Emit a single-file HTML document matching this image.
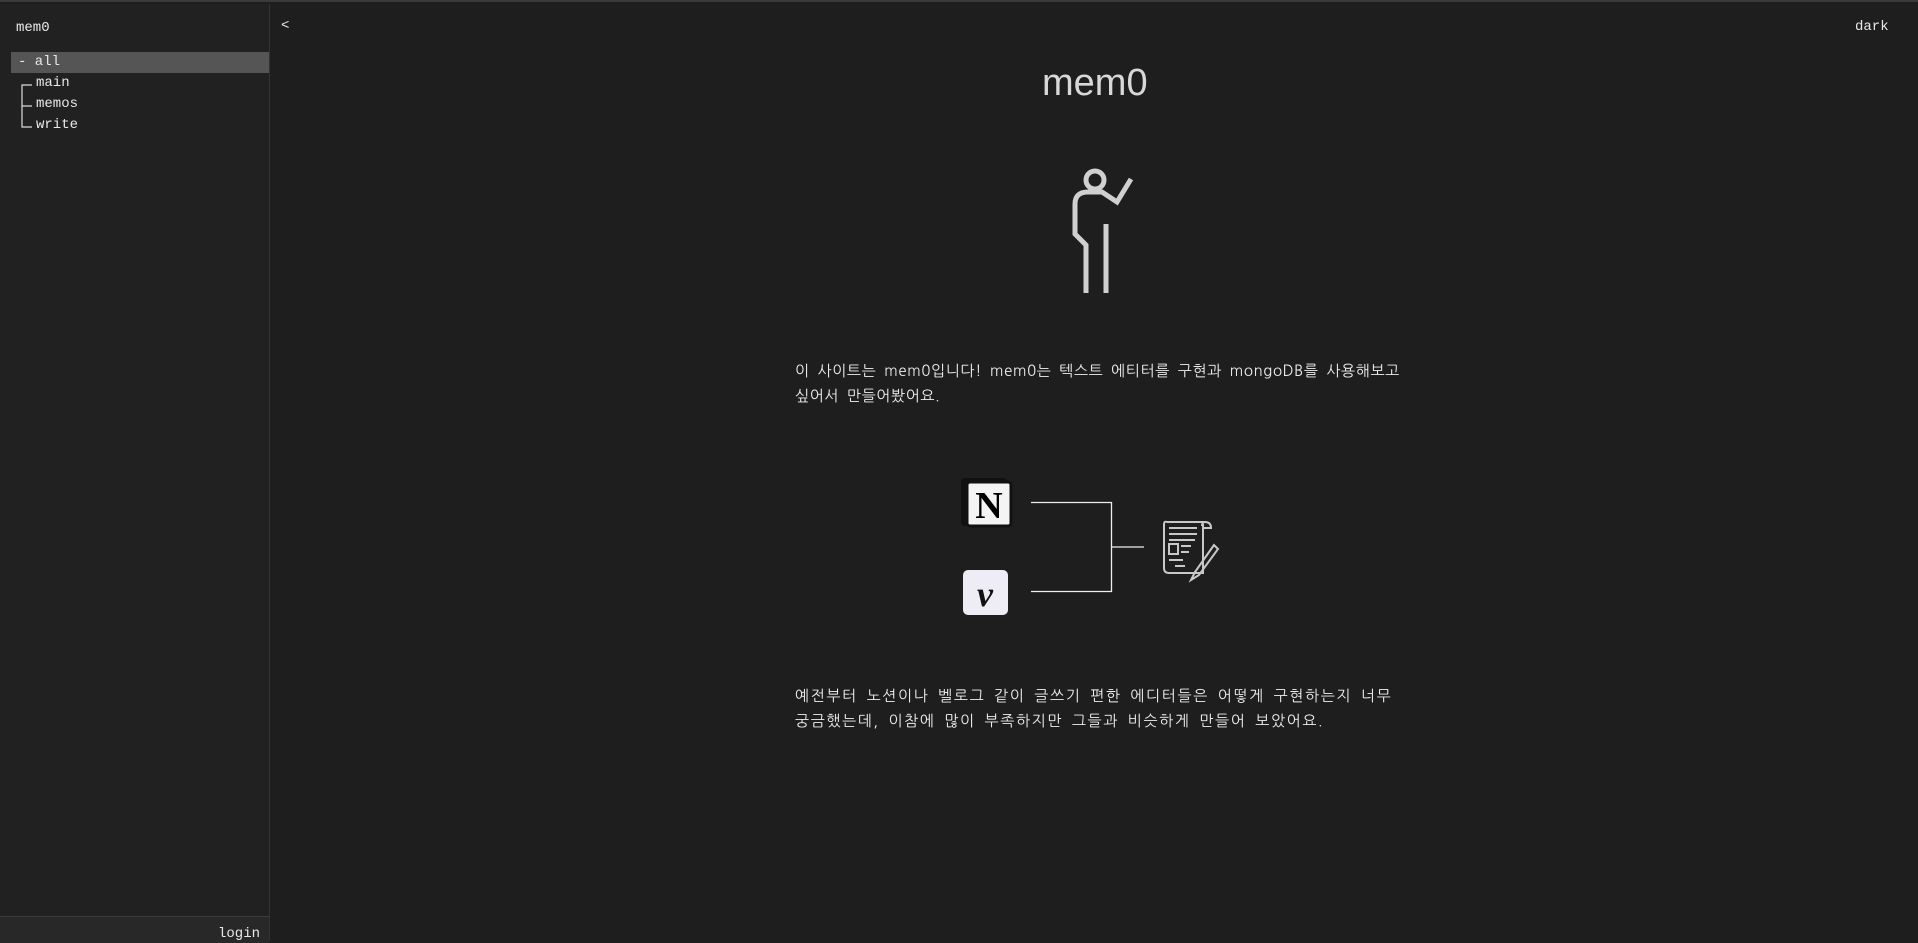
<!DOCTYPE html>
<html><head><meta charset="utf-8"><style>
*{margin:0;padding:0;box-sizing:border-box}
body{width:1918px;height:939px;background:#1e1e1e;color:#e8e8e8;font-family:"Liberation Mono","NanumGothic",monospace;font-size:14px;overflow:hidden;position:relative;border-top:2px solid #3a3a3a}
#side{position:absolute;left:0;top:2px;width:270px;height:937px;background:#212121;border-right:1px solid #333}
.t{position:absolute;white-space:nowrap}
#hl{position:absolute;left:11px;top:48px;width:258px;height:21px;background:#555}
#foot{position:absolute;left:0;top:912px;width:269px;height:27px;background:#282828;border-top:1px solid #3c3c3c}
p{position:absolute;left:795px;width:605px;font-family:"NanumGothic","Liberation Sans",sans-serif;font-size:15px;line-height:24.5px;color:#eee;letter-spacing:1.6px;word-spacing:3px}
</style></head><body>
<div id="side">
<div class="t" style="left:16px;top:16px">mem0</div>
<div id="hl"></div>
<div class="t" style="left:18px;top:50px">- all</div>
<svg style="position:absolute;left:20px;top:78px" width="14" height="50"><path d="M12 3H2V45H12M2 24H12" stroke="#ddd" fill="none" stroke-width="1.2"/></svg>
<div class="t" style="left:36px;top:71px">main</div>
<div class="t" style="left:36px;top:92px">memos</div>
<div class="t" style="left:36px;top:113px">write</div>
<div id="foot"><div class="t" style="right:9px;top:9px">login</div></div>
</div>
<div class="t" style="left:281px;top:16px">&lt;</div>
<div class="t" style="left:1855px;top:17px">dark</div>
<div class="t" style="left:1042px;top:60px;font-family:'Liberation Sans',sans-serif;font-size:38px;color:#d8d8d8">mem0</div>
<svg style="position:absolute;left:1060px;top:160px" width="80" height="135" fill="none" stroke="#d0d0d0" stroke-width="5">
<circle cx="35" cy="18" r="9"/>
<path d="M71 17L57 40L42 30H28Q15 30 15 42V72L26 83V131"/>
<path d="M46 62V131"/>
</svg>
<p style="top:358px;letter-spacing:0.6px;width:640px;white-space:nowrap">이 사이트는 mem0입니다! mem0는 텍스트 에티터를 구현과 mongoDB를 사용해보고<br>싶어서 만들어봤어요.</p>
<svg style="position:absolute;left:955px;top:470px" width="270" height="150">
<rect x="6" y="6" width="46" height="48" rx="4" fill="#111"/>
<rect x="12" y="10" width="44" height="44" rx="3" fill="#f4f4f4" stroke="#111" stroke-width="3"/>
<text x="34" y="46" font-family="Liberation Serif,serif" font-weight="bold" font-size="38" text-anchor="middle" fill="#000">N</text>
<rect x="8" y="98" width="45" height="45" rx="5" fill="#eeedf6"/>
<text x="30" y="134" font-family="Liberation Serif,serif" font-style="italic" font-weight="bold" font-size="36" text-anchor="middle" fill="#111">v</text>
<path d="M76 30.5H156.5V119.5H76M156.5 75H189" stroke="#eee" stroke-width="1.3" fill="none"/>
<g stroke="#c8c8c8" stroke-width="2" fill="none">
<path d="M212 50H250Q256 50 256 56H248M248 52V101H214Q209 101 209 96V52Q209 49 212 50"/>
<path d="M250 50Q247 50 247 54"/>
<path d="M214 56H242M214 62H242M214 68H240M226 74H236M226 80H234M214 88H228M220 94H230"/>
<rect x="214" y="72" width="9" height="10"/>
<path d="M271 81L252 108L248 116L256 111L275 85Z" transform="translate(-12,-8)"/>
</g>
</svg>
<p style="top:683px">예전부터 노션이나 벨로그 같이 글쓰기 편한 에디터들은 어떻게 구현하는지 너무 궁금했는데, 이참에 많이 부족하지만 그들과 비슷하게 만들어 보았어요.</p>
</body></html>
